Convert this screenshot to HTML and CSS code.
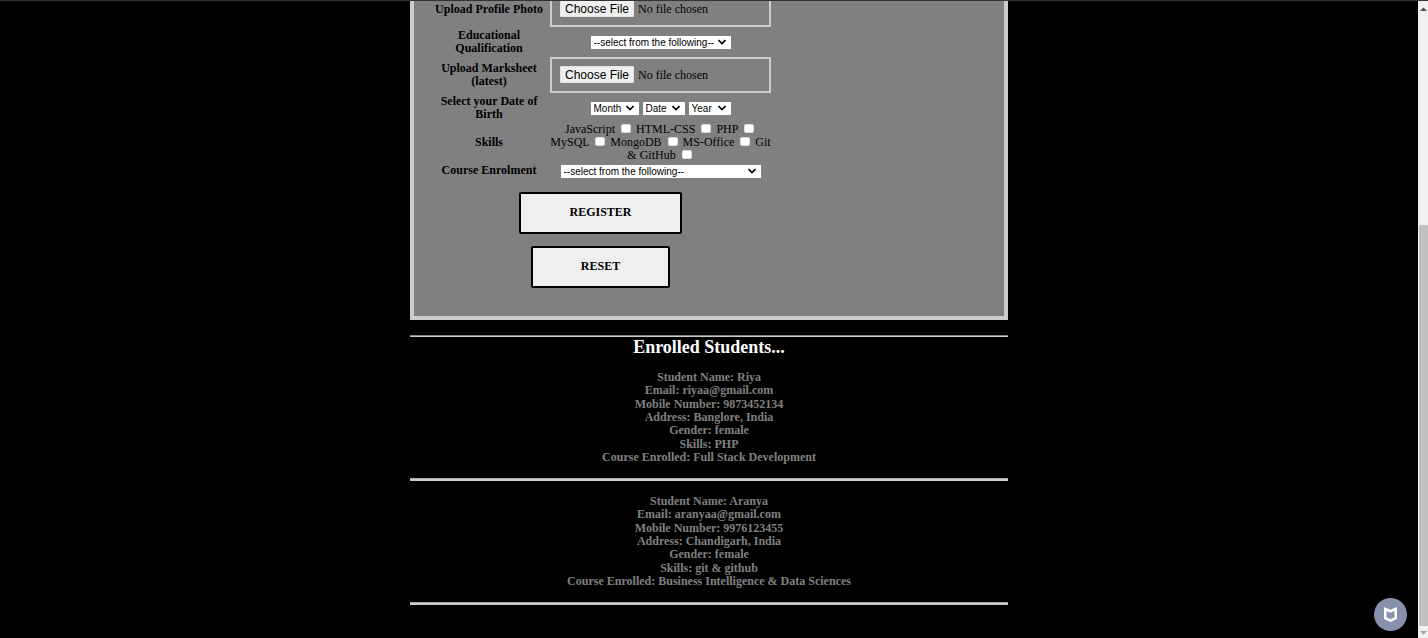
FILE: index.html
```html
<!DOCTYPE html>
<html lang="en">
<head>
<meta charset="utf-8">
<title>Student Registration</title>
<link rel="stylesheet" href="styles.css">
</head>
<body>
<main class="page">
  <form class="form">
    <table class="fields">
      <tr class="row-file">
        <th><label for="photo">Upload Profile Photo</label></th>
        <td><input class="file" type="file" id="photo"></td>
      </tr>
      <tr class="row-double">
        <th><label for="qualification">Educational<br>Qualification</label></th>
        <td><select class="select select-medium" id="qualification"><option>--select from the following--</option></select></td>
      </tr>
      <tr class="row-file">
        <th><label for="marksheet">Upload Marksheet<br>(latest)</label></th>
        <td><input class="file" type="file" id="marksheet"></td>
      </tr>
      <tr class="row-double">
        <th>Select your Date of<br>Birth</th>
        <td>
          <div class="dates">
            <select class="select select-month" aria-label="Month"><option>Month</option></select>
            <select class="select select-date" aria-label="Date"><option>Date</option></select>
            <select class="select select-date" aria-label="Year"><option>Year</option></select>
          </div>
        </td>
      </tr>
      <tr class="row-skills">
        <th>Skills</th>
        <td class="skills">
          <label for="js">JavaScript</label> <input type="checkbox" id="js"> <label for="html">HTML-CSS</label> <input type="checkbox" id="html"> <label for="php">PHP</label> <input type="checkbox" id="php"><br>
          <label for="mysql">MySQL</label> <input type="checkbox" id="mysql"> <label for="mongo">MongoDB</label> <input type="checkbox" id="mongo"> <label for="office">MS-Office</label> <input type="checkbox" id="office"> <label for="git">Git<br>&amp; GitHub</label> <input type="checkbox" id="git">
        </td>
      </tr>
      <tr class="row-single">
        <th><label for="course">Course Enrolment</label></th>
        <td><select class="select select-wide" id="course"><option>--select from the following--</option></select></td>
      </tr>
    </table>
    <div class="actions">
      <button class="button" type="submit">REGISTER</button>
      <button class="button" type="reset">RESET</button>
    </div>
  </form>
  <hr class="rule">
  <h2 class="title">Enrolled Students...</h2>
  <section class="student">
    <div>Student Name: Riya</div>
    <div>Email: riyaa@gmail.com</div>
    <div>Mobile Number: 9873452134</div>
    <div>Address: Banglore, India</div>
    <div>Gender: female</div>
    <div>Skills: PHP</div>
    <div>Course Enrolled: Full Stack Development</div>
  </section>
  <hr class="rule rule-thick">
  <section class="student">
    <div>Student Name: Aranya</div>
    <div>Email: aranyaa@gmail.com</div>
    <div>Mobile Number: 9976123455</div>
    <div>Address: Chandigarh, India</div>
    <div>Gender: female</div>
    <div>Skills: git &amp; github</div>
    <div>Course Enrolled: Business Intelligence &amp; Data Sciences</div>
  </section>
  <hr class="rule rule-thick">
</main>
<div class="scrollbar" aria-hidden="true">
  <svg class="arrow" viewBox="0 0 10 12"><path d="M2 10 L5.500 6.500 L9 10Z" fill="#505050"/></svg>
  <div class="thumb"></div>
  <svg class="arrow" viewBox="0 0 10 12"><path d="M2 5 L5.500 8.500 L9 5Z" fill="#a3a3a3"/></svg>
</div>
<button class="badge" type="button" aria-label="Site safety">
  <svg viewBox="0 0 33 33"><path d="M10 9 L16.500 11.800 L23 9 V21 L16.500 24 L10 21Z M12.500 13 V19.300 L16.500 21.200 L20.500 19.300 V13 L16.500 14.700Z" fill="#fff" fill-rule="evenodd"/></svg>
</button>
</body>
</html>
```
FILE: styles.css
```css
* {
  box-sizing: border-box;
}

body {
  margin: 0;
  height: 100vh;
  display: flex;
  overflow: hidden;
  background: #000;
  border-top: 1px solid #333;
  font: 12px/13px "Liberation Serif", "Times New Roman", serif;
}

.page {
  flex: 1;
  display: flex;
  flex-direction: column;
  align-items: center;
}

/* The top of the form is scrolled out of view. */
.form {
  width: 100%;
  max-width: 598px;
  margin-top: -12px;
  padding: 0 14px 28px;
  background: #808080;
  border: 4px solid #ccc;
  border-top: 0;
}

.fields {
  border-spacing: 2px;
}

.fields th,
.fields td {
  padding: 0;
  text-align: center;
  vertical-align: middle;
}

.fields th {
  width: 118px;
}

.fields td {
  width: 221px;
}

.row-file {
  height: 36px;
}

.row-double {
  height: 26px;
}

.row-skills {
  height: 39px;
}

.row-single {
  height: 13px;
}

.file {
  display: block;
  width: 100%;
  height: 36px;
  padding: 7px 8px;
  border: 2px solid #ccc;
  font: inherit;
  line-height: 16px;
}

.file::file-selector-button {
  height: 17px;
  margin: 0 4px 0 0;
  padding: 0 4px;
  border: 1px solid #e4e4e4;
  border-radius: 1px;
  background: #efefef;
  color: #000;
  font: 12px/14px "Liberation Sans", Arial, sans-serif;
}

.select {
  appearance: none;
  display: inline-block;
  height: 13px;
  padding: 0 2px;
  border: 1px solid #fff;
  border-radius: 0;
  background: #fff url("data:image/svg+xml,%3Csvg xmlns='http://www.w3.org/2000/svg' viewBox='0 0 8 6'%3E%3Cpath d='M.5 1l3.500 3.500L7.500 1' fill='none' stroke='%23000' stroke-width='1.6'/%3E%3C/svg%3E") no-repeat right 4px center / 8px 6px;
  color: #000;
  font: 10px/11px "Liberation Sans", Arial, sans-serif;
  vertical-align: middle;
}

.select-medium {
  width: 140px;
}

.select-month {
  width: 48px;
}

.select-date {
  width: 42px;
}

.select-wide {
  width: 200px;
}

.dates {
  display: flex;
  justify-content: center;
  gap: 4px;
}

.fields .skills {
  line-height: 13px;
  white-space: nowrap;
}

.skills input {
  appearance: none;
  width: 10px;
  height: 9px;
  margin: 0 2px 0 3px;
  background: #fff;
  border: 1px solid #ddd;
  border-radius: 2px;
}

.actions {
  width: 345px;
  padding-top: 12px;
  display: flex;
  flex-direction: column;
  align-items: center;
  gap: 12px;
}

.button {
  height: 42px;
  padding: 0 48px;
  border: 2px solid #000;
  border-radius: 2px;
  background: #efefef;
  color: #000;
  font: bold 12px/13px "Liberation Serif", "Times New Roman", serif;
}

.rule {
  width: 100%;
  max-width: 598px;
  height: 2px;
  margin: 15px 0 0;
  border: 0;
  border-top: 1px solid #808080;
  background: #ccc;
}

.rule-thick {
  height: 3px;
  margin: 13px 0 14px;
  border-color: #aaa;
}

.title {
  margin: 0 0 14px;
  color: #fff;
  font-size: 18px;
  line-height: 20px;
}

.student {
  height: 94px;
  display: grid;
  grid-auto-rows: 1fr;
  color: #808080;
  font-weight: bold;
  text-align: center;
}

.scrollbar {
  width: 10px;
  display: flex;
  flex-direction: column;
  background: #f1f1f1;
}

.arrow {
  display: block;
  width: 10px;
  height: 12px;
}

.thumb {
  flex: 1;
  margin: 212px 0 0 1px;
  background: #c1c1c1;
}

.badge {
  position: absolute;
  right: 21px;
  bottom: 7px;
  width: 33px;
  height: 33px;
  padding: 0;
  border: 0;
  border-radius: 50%;
  background: #8791ae;
}

.badge svg {
  display: block;
}
```
